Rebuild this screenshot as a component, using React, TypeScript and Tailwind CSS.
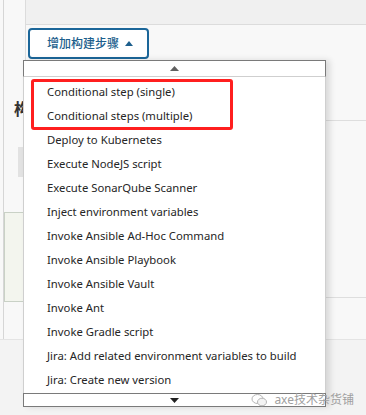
import React from "react";

const items = [
  "Conditional step (single)",
  "Conditional steps (multiple)",
  "Deploy to Kubernetes",
  "Execute NodeJS script",
  "Execute SonarQube Scanner",
  "Inject environment variables",
  "Invoke Ansible Ad-Hoc Command",
  "Invoke Ansible Playbook",
  "Invoke Ansible Vault",
  "Invoke Ant",
  "Invoke Gradle script",
  "Jira: Add related environment variables to build",
  "Jira: Create new version",
];

function StepDropdown() {
  return (
    <div className="absolute left-[23px] top-[60px] w-[303px] shadow-[4px_0_6px_rgba(0,0,0,0.12)]">
      <div className="flex h-[17px] items-center justify-center border border-[#7a7a7a] border-b-[#cfcfcf] bg-white">
        <svg width="9" height="5" viewBox="0 0 9 5">
          <path d="M0 5 L4.5 0 L9 5 Z" fill="#606060" />
        </svg>
      </div>
      <div className="relative border-x border-[#cfcfcf] bg-white pt-[3px] pb-px">
        {items.map((t) => (
          <div key={t} className="h-[24px] pl-[23px] text-[11.3px] leading-[24px] text-[#262626]">
            {t}
          </div>
        ))}
        {/* red highlight around the first two options */}
        <div className="absolute left-[7px] top-[2px] h-[51px] w-[202px] rounded-[3px] border-[3px] border-[#ff1f1f]" />
      </div>
      <div className="flex h-[14px] items-center justify-center border border-[#7a7a7a] bg-white">
        <svg width="9" height="5" viewBox="0 0 9 5">
          <path d="M0 0 L9 0 L4.5 5 Z" fill="#222" />
        </svg>
      </div>
    </div>
  );
}

function App() {
  return (
    <div
      className="relative flex h-[415px] w-[366px] flex-col overflow-hidden bg-[#f8f8f8]"
      style={{ fontFamily: '"Noto Sans", "Noto Sans CJK SC", sans-serif' }}
    >
      <div className="ml-[3px] flex h-[339px] flex-col border-l border-[#d6d6d6]">
        <div className="ml-[21px] h-[25px] border-b border-l border-[#dcdcdc] bg-[#f0f0f0]" />
        <div className="ml-[21px] h-[36px] border-l border-[#dcdcdc] pl-[2px] pt-[3px]">
          <button className="flex h-[31px] w-[121px] items-center gap-[6px] rounded-[4px] border-2 border-[#1b6699] bg-white pl-[17px] text-[12px] font-medium text-[#1d5f8d]">
            <span>增加构建步骤</span>
            <svg width="8" height="5" viewBox="0 0 8 5">
              <path d="M0 5 L4 0 L8 5 Z" fill="#1d5f8d" />
            </svg>
          </button>
        </div>
        <div className="flex flex-1">
          <div className="flex w-[20px] flex-col">
            <div className="ml-[10px] mt-[40px] text-[16px] font-bold leading-none text-[#333]">构</div>
            <div className="ml-[14px] mt-[30px] h-[30px] w-[6px] bg-[#e2e2e2]" />
            <div className="mt-[35px] h-[90px] w-[21px] border border-[#c9d1c6] bg-[#f3f5ee]" />
          </div>
          <div className="flex flex-1 flex-col">
            <div className="h-[60px] border-b border-[#dedede]" />
            <div className="h-[177px] border-b border-[#dedede]" />
          </div>
        </div>
      </div>
      <div className="flex-1 border-t border-[#e4e4e4] bg-[#f3f3f3]" />

      <StepDropdown />

      {/* watermark over everything */}
      <div className="absolute bottom-[6px] right-[12px] z-10 flex items-center gap-[6px] text-[12px] text-[#a0a0a0]">
        <svg width="17" height="15" viewBox="0 0 17 15" fill="none" stroke="#b5b5b5" strokeWidth="1">
          <ellipse cx="6.5" cy="6" rx="5.5" ry="4.5" />
          <ellipse cx="11" cy="9" rx="4.5" ry="3.8" fill="#f3f3f3" />
        </svg>
        <span>axe技术杂货铺</span>
      </div>
    </div>
  );
}

export default App;
